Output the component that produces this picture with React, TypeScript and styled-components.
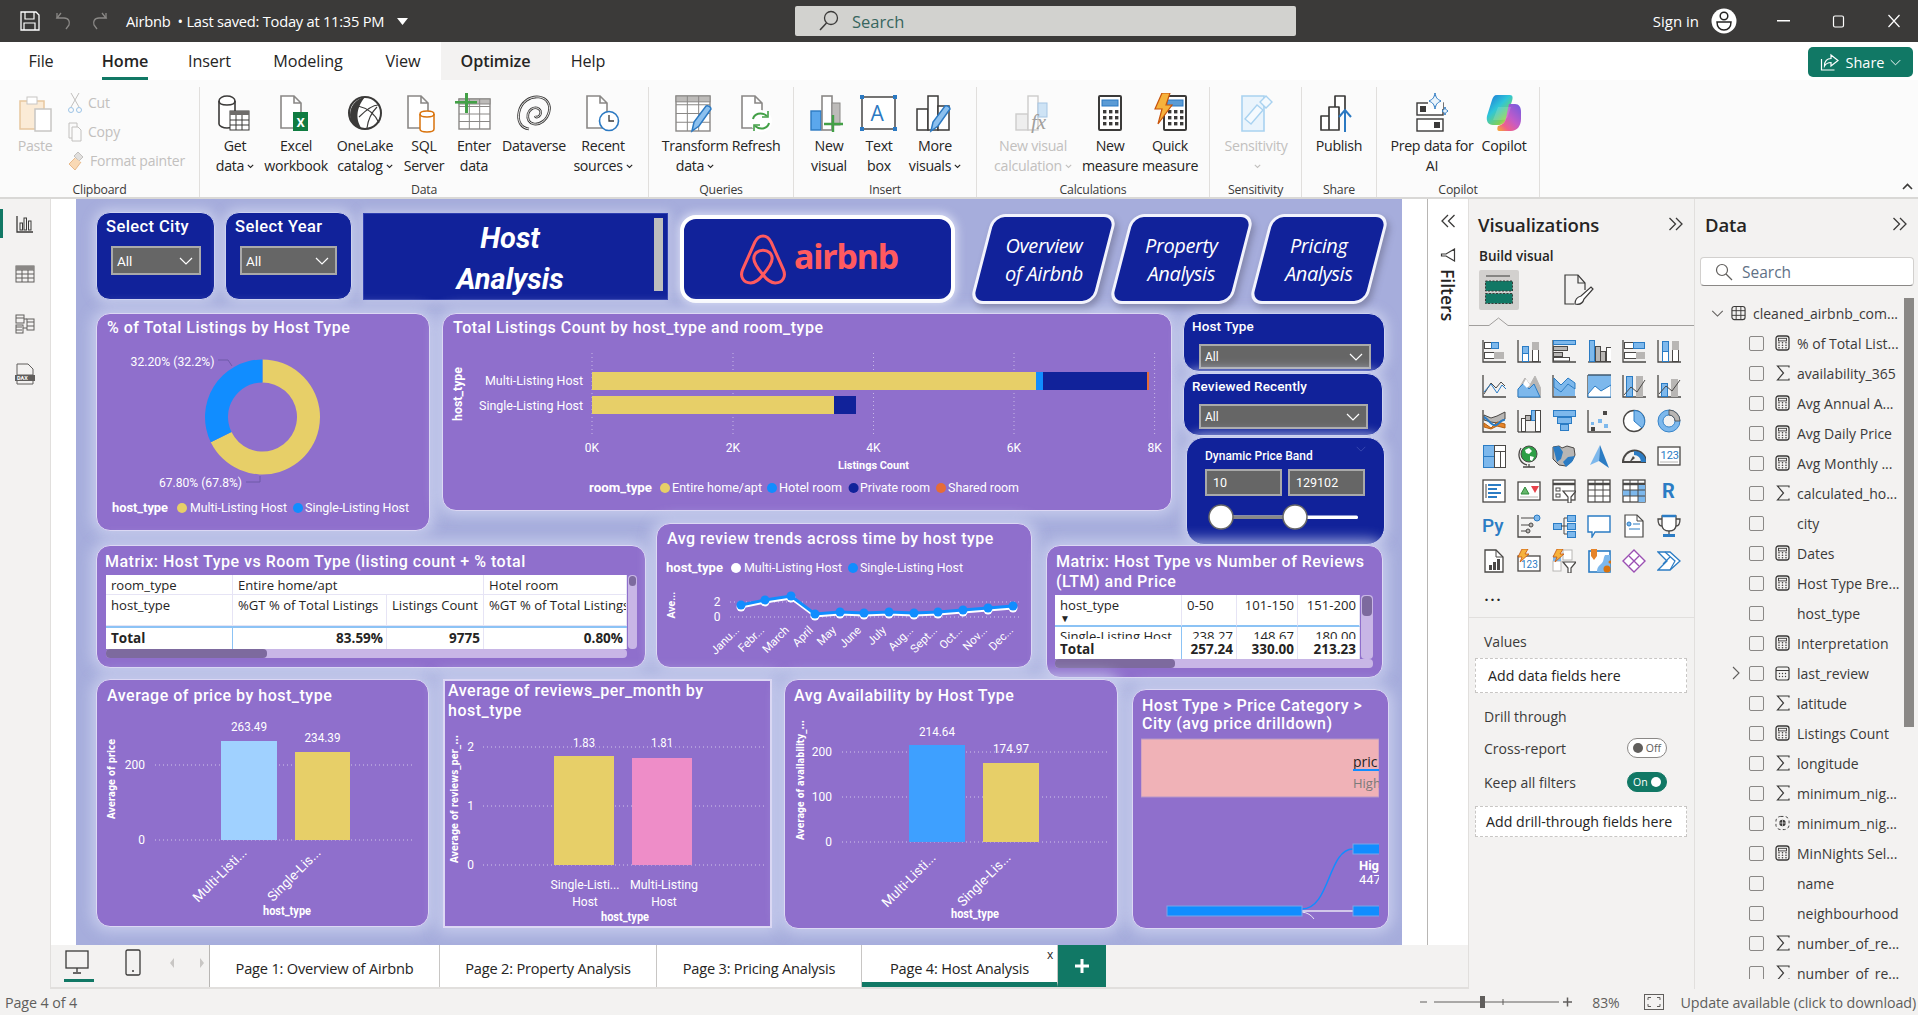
import React from "react";
import styled, { createGlobalStyle } from "styled-components";

const UI = `"Open Sans", "Noto Sans", sans-serif`;
const DIN = `Roboto, "Liberation Sans", sans-serif`;
const NAVY = "#11229A";
const CARD = "#8F6FCC";
const GREEN = "#117865";
const YEL = "#E7CF68";
const BLUE = "#118DFF";

const Global = createGlobalStyle`
  html, body { margin: 0; padding: 0; background: #fff; }
  * { box-sizing: border-box; }
  #root { width: 1918px; height: 1015px; overflow: hidden; }
`;

const App0 = styled.div`width:1918px;height:1015px;display:flex;flex-direction:column;overflow:hidden;font-family:${UI};color:#252423;`;

/* ---------- title bar ---------- */
const TitleBar = styled.header`height:42px;background:#3B3A39;display:flex;align-items:center;color:#fff;flex:none;`;
const QuickTools = styled.div`width:795px;display:flex;align-items:center;padding-left:20px;gap:13px;`;
const DocName = styled.span`font-size:14.7px;margin-left:3px;letter-spacing:-.25px;white-space:nowrap;`;
const SearchBar = styled.div`width:501px;height:30px;background:#D2D2CF;border-radius:2px;display:flex;align-items:center;padding-left:24px;gap:13px;font-size:16.5px;color:#37665E;`;
const WinArea = styled.div`flex:1;display:flex;align-items:center;justify-content:flex-end;margin-right:-3px;`;
const SignIn = styled.span`font-size:15px;margin-right:12px;`;
const WinGap = styled.span`width:19px;`;
const WinBtn = styled.span`width:55px;display:flex;justify-content:center;`;

/* ---------- tabs ---------- */
const TabBar = styled.nav`height:38px;background:#fff;display:flex;flex:none;position:relative;`;
const Tab = styled.div<{ $w: number; $on?: boolean; $hl?: boolean }>`
  width:${p => p.$w}px;height:38px;display:flex;justify-content:center;align-items:center;font-size:16.2px;letter-spacing:-.1px;
  font-weight:${p => (p.$on || p.$hl ? 600 : 400)};background:${p => (p.$hl ? "#F3F2F1" : "transparent")};
  color:#252423;
  & > span { height:38px;line-height:38px;display:block;border-bottom:${p => (p.$on ? `3px solid ${GREEN}` : "none")}; }
`;
const ShareBtn = styled.div`margin:5px 5px 0 auto;width:105px;height:30px;background:${GREEN};border-radius:5px;color:#fff;display:flex;align-items:center;justify-content:center;gap:6px;font-size:14.5px;`;

/* ---------- ribbon ---------- */
const Ribbon = styled.div`height:119px;background:#FBFBFB;display:flex;flex:none;border-bottom:2px solid #D9D8D6;position:relative;`;
const Group = styled.div<{ $w: number }>`width:${p => p.$w}px;display:flex;flex-direction:column;padding-top:7px;`;
const GroupBody = styled.div<{ $pl?: number }>`height:96px;flex:none;display:flex;padding-left:${p => p.$pl ?? 0}px;border-right:1px solid #E1DFDD;`;
const GroupLabel = styled.div`height:14px;line-height:14px;text-align:center;font-size:12.3px;color:#3B3A39;letter-spacing:-.2px;border-right:1px solid #E1DFDD;`;
const Item = styled.div<{ $w: number; $off?: boolean }>`width:${p => p.$w}px;display:flex;flex-direction:column;align-items:center;padding-top:6px;color:${p => (p.$off ? "#C2C0BE" : "#252423")};`;
const ItemIcon = styled.div`height:40px;display:flex;justify-content:center;margin-bottom:3px;`;
const ItemText = styled.div`font-size:14.2px;line-height:20px;text-align:center;white-space:nowrap;letter-spacing:-.3px;display:flex;flex-direction:column;align-items:center;`;
const ClipCol = styled.div`display:flex;flex-direction:column;padding:5px 0 0 8px;gap:8px;`;
const ClipRow = styled.div`height:21px;display:flex;align-items:center;gap:6px;font-size:14px;color:#C2C0BE;letter-spacing:-.2px;`;
const Collapse = styled.div`margin:auto 5px 2px auto;`;

/* ---------- body ---------- */
const Body = styled.main`height:790px;display:flex;flex:none;background:#F3F2F1;`;
const Rail = styled.aside`width:51px;flex:none;background:#F3F2F1;border-right:1px solid #E1DFDD;display:flex;flex-direction:column;`;
const RailItem = styled.div<{ $on?: boolean }>`height:50px;display:flex;align-items:center;justify-content:center;position:relative;
  ${p => p.$on && `&::before{content:"";position:absolute;left:0;top:10px;width:3px;height:29px;background:${GREEN};}`}`;
const Center = styled.div`width:1417px;flex:none;display:flex;flex-direction:column;`;
const Work = styled.div`height:746px;display:flex;flex:none;background:#fff;`;
const Stage = styled.div`width:1376px;background:#fff;padding:0 25px;display:flex;`;
const Canvas = styled.div`width:1326px;height:746px;flex:none;background:#A6ADDC;padding:13px 0 0 20px;display:flex;flex-direction:column;overflow:hidden;`;
const FilterPane = styled.div`width:41px;flex:none;background:#fff;border-left:1px solid #B8B6B4;display:flex;flex-direction:column;align-items:center;padding-top:15px;color:#252423;`;
const FilterGlyph = styled.svg`margin-top:20px;`;
const FilterWord = styled.div`writing-mode:vertical-rl;font-size:17.5px;font-weight:600;margin-top:7px;`;

/* ---------- canvas rows ---------- */
const Row = styled.div<{ $h: number }>`height:${p => p.$h}px;flex:none;display:flex;align-items:flex-start;`;
const Slicer = styled.div<{ $w: number; $h: number; $ml?: number; $mt?: number; $r?: number }>`
  width:${p => p.$w}px;height:${p => p.$h}px;margin-left:${p => p.$ml ?? 0}px;margin-top:${p => p.$mt ?? 0}px;background:${NAVY};color:#fff;flex:none;
  border:1px solid #CDD2F0;border-radius:${p => p.$r ?? 14}px;box-shadow:0 0 12px 3px rgba(208,212,240,.8);
`;
const SlicerStack = styled.div`width:202px;margin-left:11px;flex:none;`;
const SlicerTitle = styled.div<{ $fs?: number; $pl: number; $pt: number; $ls?: number }>`font-family:${DIN};font-weight:500;font-size:${p => p.$fs ?? 16.5}px;letter-spacing:${p => p.$ls ?? .4}px;line-height:20px;padding:${p => p.$pt}px 0 0 ${p => p.$pl}px;white-space:nowrap;`;
const Drop = styled.div<{ $w: number; $h: number; $ml: number; $mt: number; $fs?: number }>`
  width:${p => p.$w}px;height:${p => p.$h}px;margin:${p => p.$mt}px 0 0 ${p => p.$ml}px;background:#666;border:2px solid #A9A9A9;color:#fff;
  font-family:${DIN};font-size:${p => p.$fs ?? 13.5}px;display:flex;align-items:center;justify-content:space-between;padding:0 6px 0 4px;
`;
const TitleBlock = styled.div`width:305px;height:87px;margin:1px 0 0 11px;background:${NAVY};border:1px solid #2F3FB0;flex:none;display:flex;color:#fff;box-shadow:0 0 10px 2px rgba(208,212,240,.7);`;
const TitleText = styled.div`flex:1;text-align:center;font-family:${DIN};font-style:italic;font-weight:700;font-size:29px;line-height:41px;padding:4px 0 0 2px;`;
const TitleThumb = styled.div`width:9px;margin:4px 4px 8px 0;background:#BEBEBE;`;
const LogoCard = styled.div`width:275px;height:88px;margin:3px 0 0 12px;background:${NAVY};border:4px solid #fff;border-radius:16px;flex:none;display:flex;align-items:center;padding-left:55px;gap:7px;box-shadow:0 0 10px 2px rgba(230,232,250,.8);`;
const LogoWord = styled.span`font-family:"Noto Sans",sans-serif;font-weight:700;font-size:34px;color:#FF5A5F;letter-spacing:-1.1px;line-height:1;margin-top:-6px;`;
const NavWrap = styled.div`display:flex;margin:2px 0 0 26px;`;
const NavCard = styled.div<{ $w: number; $ml?: number }>`width:${p => p.$w}px;margin-left:${p => p.$ml ?? 0}px;height:90px;background:${NAVY};border:3px solid #F2F3FC;border-radius:13px;transform:skewX(-14.5deg);box-shadow:4px 4px 6px rgba(90,90,120,.45);display:flex;align-items:center;justify-content:center;`;
const NavText = styled.div`transform:skewX(14.5deg);color:#fff;font-family:${UI};font-style:italic;font-size:20px;line-height:28px;text-align:center;letter-spacing:-.4px;white-space:nowrap;padding-top:2px;`;

const Card = styled.section<{ $w: number; $h: number; $ml?: number; $mt?: number; $square?: boolean }>`
  width:${p => p.$w}px;height:${p => p.$h}px;margin-left:${p => p.$ml ?? 0}px;margin-top:${p => p.$mt ?? 0}px;flex:none;background:${CARD};
  border:${p => (p.$square ? "2px" : "1px")} solid #DCD8F4;border-radius:${p => (p.$square ? 0 : 14)}px;
  box-shadow:0 0 14px 5px rgba(205,210,240,.8);overflow:hidden;color:#fff;
`;
const CardTitle = styled.h2<{ $pt: number; $lh?: number; $pl?: number }>`
  margin:0;padding:${p => p.$pt}px 4px 3px ${p => p.$pl ?? 10}px;font-family:${DIN};font-weight:500;font-size:16px;line-height:${p => p.$lh ?? 20}px;color:#fff;letter-spacing:.5px;
`;
const PlotSvg = styled.svg`display:block;overflow:hidden;`;
const ChartT = styled.text<{ $b?: boolean; $fs?: number; $fam?: string; $c?: string }>`
  font-family:${p => p.$fam ?? DIN};font-size:${p => p.$fs ?? 12}px;font-weight:${p => (p.$b ? 700 : 400)};fill:${p => p.$c ?? "#fff"};
`;

/* matrix */
const MatrixWrap = styled.div<{ $ml: number }>`margin-left:${p => p.$ml}px;`;
const MatrixMain = styled.div`display:flex;`;
const MatrixGrid = styled.div<{ $cols: string; $rows: string; $w: number; $h: number }>`
  width:${p => p.$w}px;height:${p => p.$h}px;display:grid;grid-template-columns:${p => p.$cols};grid-template-rows:${p => p.$rows};background:#fff;overflow:hidden;color:#252423;font-size:13.1px;
`;
const Cell = styled.div<{ $span?: number; $right?: boolean; $bold?: boolean; $rule?: string; $bb?: string; $top?: boolean }>`
  grid-column:span ${p => p.$span ?? 1};padding:${p => (p.$top ? "0" : "1px")} 3px 0 5px;white-space:nowrap;overflow:hidden;
  text-align:${p => (p.$right ? "right" : "left")};font-weight:${p => (p.$bold ? 700 : 400)};
  font-size:${p => (p.$bold ? "13.5px" : "inherit")};
  border-right:1px solid ${p => p.$rule ?? "#E6E4F5"};border-bottom:${p => p.$bb ?? "1px solid #E6E4F5"};line-height:18px;
`;
const HeadRule = styled.div`grid-column:1 / -1;background:#8CC3F5;`;
const SortMark = styled.div`font-size:10px;line-height:9px;`;
const VScroll = styled.div<{ $w: number }>`width:${p => p.$w}px;background:#C8B6E6;border-radius:4px;margin-left:1px;`;
const VThumb = styled.div<{ $h: number }>`height:${p => p.$h}px;margin:1px;background:#7D6A9E;border-radius:4px;`;
const HScroll = styled.div<{ $w: number }>`width:${p => p.$w}px;height:9px;background:#C8B6E6;border-radius:4px;`;
const HThumb = styled.div<{ $w: number }>`width:${p => p.$w}px;height:9px;background:#7D6A9E;border-radius:4px;`;

/* price band */
const PriceInputs = styled.div`display:flex;gap:6px;padding:3px 0 0 18px;`;
const PriceInput = styled.div`width:77px;height:27px;background:#666;border:2px solid #A9A9A9;color:#fff;font-family:${DIN};font-size:12.5px;display:flex;align-items:center;padding-left:6px;`;
const BandHead = styled.div`display:flex;justify-content:space-between;padding:8px 18px 0 18px;font-family:${DIN};font-weight:500;font-size:12px;line-height:20px;`;
const BandSlider = styled.svg`display:block;margin-top:7px;`;

/* page bar */
const PageBar = styled.div`height:44px;flex:none;display:flex;background:#F3F2F1;border-bottom:2px solid #E1DFDD;`;
const DeviceBar = styled.div`width:159px;flex:none;display:flex;align-items:flex-start;border-right:1px solid #B8B6B4;`;
const DeviceBtn = styled.div<{ $w: number; $on?: boolean }>`width:${p => p.$w}px;height:36px;display:flex;justify-content:center;padding-top:4px;position:relative;
  ${p => p.$on && `&::after{content:"";position:absolute;left:13px;bottom:-1px;width:30px;height:3px;background:${GREEN};}`}`;
const PageTab = styled.div<{ $w: number; $on?: boolean }>`width:${p => p.$w}px;height:42px;flex:none;background:#fff;display:flex;align-items:center;justify-content:center;font-size:14.6px;letter-spacing:-.2px;color:#252423;padding-top:${p => (p.$on ? 9 : 4)}px;position:relative;font-weight:${p => (p.$on ? 500 : 400)};
  border-right:1px solid #C8C6C4;border-bottom:${p => (p.$on ? `5px solid ${GREEN}` : "none")};`;
const TabClose = styled.span`position:absolute;right:4px;top:4px;font-size:12px;line-height:12px;`;
const AddPage = styled.div`width:48px;height:42px;background:${GREEN};display:flex;align-items:center;justify-content:center;color:#fff;`;

/* viz pane */
const VizPane = styled.section`width:226px;flex:none;background:#F3F2F1;border-left:1px solid #E1DFDD;display:flex;flex-direction:column;`;
const PaneHead = styled.div<{ $pl: number; $pr: number }>`display:flex;justify-content:space-between;align-items:center;padding:13px ${p => p.$pr}px 0 ${p => p.$pl}px;height:37px;font-size:18.5px;font-weight:600;color:#252423;letter-spacing:-.1px;`;
const BuildLabel = styled.div`font-size:13.5px;font-weight:600;padding:12px 0 0 10px;line-height:17px;`;
const VizTabs = styled.div`display:flex;padding:5px 0 0 10px;align-items:center;gap:44px;`;
const VizTabOn = styled.div`width:40px;height:40px;background:#D2D0CE;border-radius:2px;display:flex;align-items:center;justify-content:center;`;
const Notch = styled.svg`display:block;margin-top:7px;`;
const Gallery = styled.div`display:grid;grid-template-columns:repeat(6,35px);grid-auto-rows:35px;padding:7px 0 0 7px;justify-items:center;align-items:center;`;
const Dots = styled.div`font-size:14px;font-weight:700;letter-spacing:2px;line-height:20px;`;
const GalleryEnd = styled.div`height:4px;flex:none;`;
const Rule = styled.hr`width:100%;border:0;border-top:1px solid #E1DFDD;margin:0;`;
const SectionName = styled.div<{ $mt: number }>`font-size:14px;padding-left:15px;margin-top:${p => p.$mt}px;line-height:20px;color:#3B3A39;`;
const DropBox = styled.div<{ $h: number; $mt: number; $pl: number }>`width:212px;height:${p => p.$h}px;margin:${p => p.$mt}px 0 0 6px;background:#fff;border:1px dashed #C8C6C4;display:flex;align-items:center;padding-left:${p => p.$pl}px;font-size:14.2px;white-space:nowrap;color:#252423;`;
const ToggleRow = styled.div<{ $mt: number }>`display:flex;align-items:center;justify-content:space-between;width:183px;margin:${p => p.$mt}px 0 0 15px;font-size:14px;height:20px;color:#3B3A39;`;
const Toggle = styled.div<{ $on?: boolean }>`width:40px;height:20px;border-radius:10px;background:${p => (p.$on ? GREEN : "#fff")};border:1px solid ${p => (p.$on ? GREEN : "#8A8886")};color:${p => (p.$on ? "#fff" : "#605E5C")};font-size:10.5px;display:flex;flex-direction:${p => (p.$on ? "row-reverse" : "row")};align-items:center;justify-content:space-between;padding:0 5px;`;
const Knob = styled.i<{ $on?: boolean }>`width:10px;height:10px;border-radius:50%;background:${p => (p.$on ? "#fff" : "#605E5C")};display:block;`;

/* data pane */
const DataPane = styled.section`width:224px;flex:none;background:#F3F2F1;border-left:1px solid #E1DFDD;display:flex;flex-direction:column;`;
const DataSearch = styled.div`width:214px;height:29px;margin:21px 0 0 5px;background:#fff;border:1px solid #D2D0CE;border-bottom:1px solid #8A8886;border-radius:4px;display:flex;align-items:center;padding-left:14px;gap:9px;font-size:15.5px;color:#5F7186;`;
const ListArea = styled.div`display:flex;height:681px;margin-top:12px;overflow:hidden;`;
const FieldList = styled.div`width:209px;flex:none;`;
const FieldRow = styled.div<{ $root?: boolean }>`height:30px;display:flex;align-items:center;font-size:14px;color:#3B3A39;white-space:nowrap;padding-left:${p => (p.$root ? 16 : 54)}px;position:relative;`;
const Caret = styled.div`width:20px;flex:none;display:flex;align-items:center;`;
const ExpandMark = styled.svg`position:absolute;left:37px;top:8px;`;
const Box = styled.div`width:15px;height:15px;border:1px solid #8A8886;border-radius:2px;background:transparent;flex:none;margin-right:11px;`;
const FieldIcon = styled.div`width:15px;flex:none;margin-right:7px;display:flex;align-items:center;justify-content:center;`;
const DataThumb = styled.div`width:10px;height:431px;background:#8A8886;flex:none;margin-top:-2px;`;

/* status bar */
const Status = styled.footer`height:26px;flex:none;background:#F3F2F1;display:flex;align-items:center;font-size:14.3px;letter-spacing:-.1px;color:#605E5C;padding:0 2px 0 5px;`;
const StatusRight = styled.div`margin-left:auto;display:flex;align-items:center;`;
const ZoomPct = styled.span`margin-left:17px;font-size:14px;`;
const FitIcon = styled.svg`margin:0 17px 0 24px;`;
const UpdateNote = styled.span`font-size:14.3px;white-space:nowrap;`;

/* ---------- svg helpers ---------- */
type TP = { x: number; y: number; w?: number; a?: "start" | "middle" | "end"; b?: boolean; fs?: number; r?: number; fam?: string; c?: string; children: React.ReactNode };
const T = ({ x, y, w, a = "start", b, fs, r, fam, c, children }: TP) => (
  <ChartT x={x} y={y} textAnchor={a} dominantBaseline="central" $b={b} $fs={fs} $fam={fam} $c={c}
    textLength={w} lengthAdjust={w ? "spacingAndGlyphs" : undefined}
    transform={r !== undefined ? `rotate(${r} ${x} ${y})` : undefined}>{children}</ChartT>
);
const GridH = ({ x1, x2, y }: { x1: number; x2: number; y: number }) => <line x1={x1} x2={x2} y1={y} y2={y} stroke="#fff" strokeOpacity=".6" strokeWidth="1" strokeDasharray="1 3" />;
const GridV = ({ x, y1, y2 }: { x: number; y1: number; y2: number }) => <line x1={x} x2={x} y1={y1} y2={y2} stroke="#fff" strokeOpacity=".5" strokeWidth="1" strokeDasharray="1 3" />;
const Plot = ({ x, y, w, h, children }: { x: number; y: number; w: number; h: number; children: React.ReactNode }) => (
  <PlotSvg width={w} height={h} viewBox={`${x} ${y} ${w} ${h}`}>{children}</PlotSvg>
);
const Dot = ({ x, y, c, r = 5 }: { x: number; y: number; c: string; r?: number }) => <circle cx={x} cy={y} r={r} fill={c} />;
const Chev = ({ c = "#fff", w = 14, h = 8, sw = 1.2 }: { c?: string; w?: number; h?: number; sw?: number }) => (
  <svg width={w} height={h} viewBox="0 0 14 8" fill="none"><path d="M1 1l6 6 6-6" stroke={c} strokeWidth={sw} /></svg>
);
const MiniSvg = styled.svg`margin-left:3px;`;
const Mini = () => <MiniSvg width="7" height="5" viewBox="0 0 7 5" fill="none"><path d="M.8.8l2.7 2.7L6.2.8" stroke="currentColor" strokeWidth="1.1" /></MiniSvg>;
const DDWrap = styled.span`display:inline-flex;align-items:center;`;
const DD = ({ children }: { children: React.ReactNode }) => <DDWrap>{children}<Mini /></DDWrap>;
const MiniLine = styled.div`height:20px;display:flex;align-items:center;`;

/* ---------- ribbon icons ---------- */
const K = "#3B3A39", GY = "#8A8886";
const Ic = ({ children, w = 40 }: { children: React.ReactNode; w?: number }) => <svg width={w} height="40" viewBox={`0 0 ${w} 40`} fill="none">{children}</svg>;
const Doc = ({ x = 6, c = GY }: { x?: number; c?: string }) => <path d={`M${x} 3h13l7 7v25h-20z M${x + 13} 3v7h7`} fill="#fff" stroke={c} strokeWidth="1.6" />;
const Calc = ({ x = 10 }: { x?: number }) => (<g>
  <rect x={x} y="3" width="22" height="34" rx="1" fill="#fff" stroke={K} strokeWidth="2" />
  <rect x={x + 3} y="7" width="16" height="6" fill="#5B9BD5" stroke="#2B79C2" />
  {[17, 23, 29].map(y => [4, 10, 16].map(dx => <rect key={`${y}${dx}`} x={x + dx} y={y} width="3.4" height="3.4" fill={K} />))}
</g>);
const GridIc = ({ x, y, w, h, head = "#BDBBB9" }: { x: number; y: number; w: number; h: number; head?: string }) => (<g>
  <rect x={x} y={y} width={w} height={h} fill="#fff" stroke={GY} strokeWidth="1.4" />
  <rect x={x} y={y} width={w} height={h / 6} fill={head} stroke={GY} />
  {[1, 2, 3].map(i => <line key={i} x1={x} x2={x + w} y1={y + (h / 4) * i} y2={y + (h / 4) * i} stroke={GY} />)}
  {[1, 2].map(i => <line key={i} y1={y} y2={y + h} x1={x + (w / 3) * i} x2={x + (w / 3) * i} stroke={GY} />)}
</g>);
const Pencil = ({ x, y }: { x: number; y: number }) => <path d={`M${x} ${y + 26}l2-9L${x + 14} ${y + 1}c2-1 5 1 5 3L${x + 7} ${y + 21}z`} fill="#8CC0EE" stroke="#2B79C2" strokeWidth="1.5" />;
const RibbonIcons: Record<string, React.ReactNode> = {
  paste: <Ic w={36}><rect x="3" y="8" width="24" height="28" fill="#FBEBD6" stroke="#E8C79F" strokeWidth="1.5" /><rect x="10" y="4" width="10" height="7" fill="#fff" stroke="#C8C6C4" /><rect x="18" y="16" width="16" height="22" fill="#fff" stroke="#C8C6C4" strokeWidth="1.5" /></Ic>,
  get: <Ic><path d="M4 8c0-3 4-5 8-5s8 2 8 5v23c0 2-4 4-8 4s-8-2-8-4z" fill="#fff" stroke={K} strokeWidth="1.6" /><path d="M4 8c0 3 4 4 8 4s8-1 8-4" stroke={K} strokeWidth="1.6" /><rect x="15" y="18" width="19" height="19" fill="#fff" stroke={K} /><rect x="15" y="18" width="19" height="4" fill="#6E6C6A" /><path d="M15 27h19M15 32h19M21 22v15M27 22v15" stroke={K} /></Ic>,
  excel: <Ic><Doc x={5} /><rect x="17" y="19" width="15" height="19" fill="#107C41" /><text x="20.6" y="33.5" fill="#fff" fontFamily="Roboto" fontSize="13" fontWeight="700">X</text></Ic>,
  lake: <Ic><circle cx="20" cy="20" r="16" fill="#fff" stroke={K} strokeWidth="2" /><path d="M20 4C10 6 5 14 5 22c0 7 5 12 12 14-6-8-7-20 3-32z" fill="#3B3A39" /><path d="M13 13c9 2 17 8 21 17M14 24c8-8 14-12 19-12M22 35c1-8 4-15 10-21" stroke={K} strokeWidth="1.1" /></Ic>,
  sql: <Ic w={36}><Doc x={2} /><path d="M14 21c0-2 3-3 7-3s7 1 7 3v15c0 2-3 3-7 3s-7-1-7-3z" fill="#FFF" stroke="#D9730D" strokeWidth="1.5" /><path d="M14 21c0 2 3 3 7 3s7-1 7-3" stroke="#D9730D" strokeWidth="1.5" /></Ic>,
  enter: <Ic w={38}><GridIc x={4} y={6} w={31} h={30} /><rect x="4" y="0" width="3" height="20" fill="#43A047" transform="translate(6 0)" /><rect x="0" y="8" width="22" height="2.6" fill="#43A047" /></Ic>,
  dv: <Ic><path d="M15 36C7 35 3 28 5 19 7 9 16 3 25 4c8 1 12 8 10 15-2 8-9 13-15 12-5-1-7-5-6-10 1-4 5-7 9-6 3 1 5 4 3 7-1 2-4 3-5 1" stroke={K} strokeWidth="2.6" /><path d="M15 36C7 35 3 28 5 19 7 9 16 3 25 4c8 1 12 8 10 15-2 8-9 13-15 12-5-1-7-5-6-10 1-4 5-7 9-6 3 1 5 4 3 7-1 2-4 3-5 1" stroke="#fff" strokeWidth=".9" /></Ic>,
  recent: <Ic><Doc x={4} /><circle cx="26" cy="28" r="9.5" fill="#fff" stroke="#2B79C2" strokeWidth="1.6" /><path d="M26 22v6h5" stroke={K} strokeWidth="1.3" /></Ic>,
  transform: <Ic w={42}><GridIc x={2} y={3} w={34} h={35} /><Pencil x={18} y={12} /></Ic>,
  refresh: <Ic><Doc x={6} /><circle cx="25" cy="28" r="11" fill="#fff" /><path d="M17 26c1-5 8-8 14-3M33 30c-1 5-8 8-14 3" stroke="#43A047" strokeWidth="2" /><path d="M32 18v6h-6M18 38v-6h6" stroke="#43A047" strokeWidth="1.6" /></Ic>,
  newviz: <Ic><rect x="2" y="18" width="10" height="19" fill="#5BA7EC" stroke="#2B79C2" strokeWidth="1.4" /><rect x="13" y="3" width="10" height="34" fill="#fff" stroke={GY} strokeWidth="1.6" /><rect x="23" y="10" width="8" height="22" fill="#BDBBB9" stroke={GY} /><path d="M24 22v17M15 31h19" stroke="#43A047" strokeWidth="2.4" /></Ic>,
  textbox: <Ic><rect x="3" y="4" width="33" height="32" fill="#fff" stroke={K} strokeWidth="1.4" />{[[3, 4], [36, 4], [3, 36], [36, 36]].map(([x, y]) => <rect key={`${x}${y}`} x={x - 2} y={y - 2} width="4" height="4" fill="#2B79C2" />)}<text x="11.5" y="28" fill="#2B79C2" fontFamily="Open Sans" fontSize="21">A</text></Ic>,
  more: <Ic w={38}><rect x="1" y="16" width="11" height="21" fill="#fff" stroke={K} strokeWidth="1.5" /><rect x="12" y="3" width="10" height="34" fill="#fff" stroke={K} strokeWidth="1.5" /><rect x="22" y="13" width="11" height="24" fill="#fff" stroke={K} strokeWidth="1.5" /><Pencil x={15} y={12} /></Ic>,
  vcalc: <Ic><g opacity=".4"><rect x="3" y="21" width="12" height="16" fill="#ddd" stroke={GY} strokeWidth="1.4" /><rect x="15" y="3" width="10" height="34" fill="#fff" stroke={GY} strokeWidth="1.4" /><rect x="25" y="10" width="9" height="14" fill="#8CC0EE" stroke="#2B79C2" /></g><text x="18" y="36" fontFamily="Liberation Serif" fontStyle="italic" fontSize="21" fill="#A19F9D">fx</text></Ic>,
  measure: <Ic w={36}><Calc x={7} /></Ic>,
  quick: <Ic><Calc x={14} /><path d="M12 0h8l-4 12h6L8 31l4-15H5z" fill="#F6B23C" stroke="#C8530B" strokeWidth="1.2" /></Ic>,
  sens: <Ic><path d="M6 3h22v35H6z" fill="#EAF4FC" stroke="#A9D2F0" strokeWidth="1.6" /><path d="M15 31L9 26l12-14 6 5z M24 9l6-6 6 6-6 6z" fill="#F5FAFE" stroke="#A9D2F0" strokeWidth="1.4" /></Ic>,
  publish: <Ic><path d="M2 23h8v14H2zM10 14h10v23H10zM16 14V3h10v22" fill="#fff" stroke={K} strokeWidth="1.7" strokeLinejoin="round" /><path d="M26 39V17M20 24l6-7 6 7" stroke="#2B79C2" strokeWidth="2" /></Ic>,
  prep: <Ic w={36}><rect x="3" y="10" width="26" height="12" fill="#fff" stroke={K} strokeWidth="1.4" /><rect x="6" y="13" width="6" height="6" fill={K} /><rect x="3" y="26" width="26" height="12" fill="#fff" stroke={K} strokeWidth="1.4" /><rect x="20" y="29" width="6" height="6" fill={K} /><rect x="14" y="0" width="15" height="16" fill="#FBFBFB" /><path d="M21 0c1 5 2 6 6 8-4 2-5 3-6 8-1-5-2-6-6-8 4-2 5-3 6-8zM31 14c.6 2 1 3 3 4-2 1-2.4 2-3 4-.6-2-1-3-3-4 2-1 2.4-2 3-4z" fill="#EAF4FC" stroke="#2B79C2" /></Ic>,
  copilot: <Ic><defs><linearGradient id="cpa" x1="0" y1="0" x2="0.8" y2="1"><stop offset="0" stopColor="#1B6FD8" /><stop offset=".45" stopColor="#2FC6D8" /><stop offset=".8" stopColor="#7FD05A" /><stop offset="1" stopColor="#F2C94C" /></linearGradient><linearGradient id="cpb" x1="1" y1="0" x2="0.1" y2="1"><stop offset="0" stopColor="#6D5BE0" /><stop offset=".5" stopColor="#C35BC8" /><stop offset=".8" stopColor="#F0608A" /><stop offset="1" stopColor="#F5A13C" /></linearGradient></defs><path d="M13 2h13c3 0 3 3 2 6l-6 18c-1 4-4 6-8 6H9c-5 0-7-4-6-9L8 7c1-3 2-5 5-5z" fill="url(#cpa)" /><path d="M25 11h6c4 0 6 3 6 8v7c0 7-4 12-10 12H15c-2 0-2-3-1-5 4-1 7-3 8-8z" fill="url(#cpb)" /><path d="M14 14h13l-3 9c-1 3-3 4-6 4h-9z" fill="#FFF" fillOpacity=".15" /></Ic>,
};

/* ---------- visual gallery ---------- */
const VD = "#4A4846", VB = "#2B7CC4", VL = "#7DB8EC", VG = "#B8B6B4", VW = "#fff";
const Rc = ({ x, y, w, h, f = VL, s = VB }: { x: number; y: number; w: number; h: number; f?: string; s?: string }) => <rect x={x + .5} y={y + .5} width={w} height={h} fill={f} stroke={s} />;
const Ax = () => <path d="M1 1v22h23" stroke={VD} strokeWidth="1.3" fill="none" />;
const Bt = () => <path d="M1 23h23" stroke={VD} strokeWidth="1.3" fill="none" />;
const vizIcons: React.ReactNode[] = [
  <><Ax /><Rc x={2} y={3} w={7} h={6} f={VW} s={VD} /><Rc x={9} y={3} w={7} h={6} /><Rc x={2} y={13} w={10} h={6} f={VW} s={VD} /><Rc x={12} y={13} w={9} h={6} f={VG} s={VG} /></>,
  <><Ax /><Rc x={5} y={14} w={6} h={8} f={VW} /><Rc x={5} y={7} w={6} h={7} /><Rc x={15} y={10} w={6} h={12} f={VW} s={VD} /><Rc x={15} y={3} w={6} h={7} f={VG} s={VG} /></>,
  <><Ax /><Rc x={1} y={1} w={22} h={4} /><Rc x={1} y={7} w={14} h={4} f={VG} s={VD} /><Rc x={1} y={13} w={9} h={4} f={VG} s={VD} /><Rc x={1} y={18} w={16} h={3.5} f={VW} s={VD} /></>,
  <><Bt /><Rc x={2} y={1} w={5} h={21} /><Rc x={8} y={7} w={5} h={15} f={VG} s={VD} /><Rc x={13} y={12} w={5} h={10} f={VG} s={VD} /><Rc x={19} y={8} w={5} h={14} f={VW} s={VD} /></>,
  <><Ax /><Rc x={2} y={3} w={9} h={6} f={VW} s={VD} /><Rc x={11} y={3} w={11} h={6} /><Rc x={2} y={13} w={12} h={6} f={VW} s={VD} /><Rc x={14} y={13} w={8} h={6} f={VG} s={VG} /></>,
  <><Ax /><Rc x={5} y={12} w={6} h={10} f={VW} /><Rc x={5} y={2} w={6} h={10} /><Rc x={15} y={10} w={6} h={12} f={VW} s={VD} /><Rc x={15} y={2} w={6} h={8} f={VG} s={VG} /></>,
  <><Ax /><path d="M2 20L9 9l5 5 5-6 4 4" stroke={VD} fill="none" /><path d="M2 14l7-8 6 9 5-8 4 4" stroke={VB} fill="none" transform="translate(0 4)" /></>,
  <><Bt /><path d="M1 23V16L8 4l5 7 5-9 6 13v8z" fill={VG} stroke={VG} /><path d="M1 23v-8l6-6 5 6 5-5 6 13z" fill={VL} stroke={VB} /><path d="M6 10l3-5 4 6-3 3z" fill={VW} /></>,
  <><Ax /><path d="M2 22v-9l7 5 7-8 7 5v7z" fill={VL} /><path d="M2 4l7 7 7-7 7 5v6l-7-5-7 8-7-5z" fill={VL} stroke={VB} /></>,
  <><Ax /><rect x="1" y="1" width="23" height="21" fill={VL} /><path d="M1 1h23M1 20l7-8 6 5 10-6v12H1z" stroke={VB} fill={VW} /><path d="M1 1h23" stroke={VD} /></>,
  <><Ax /><Rc x={4} y={2} w={6} h={20} /><Rc x={14} y={2} w={6} h={20} f={VG} s={VG} /><path d="M2 21l7-8 6 5 8-12" stroke={VD} fill="none" /></>,
  <><Ax /><Rc x={4} y={9} w={6} h={13} /><Rc x={14} y={5} w={6} h={17} f={VG} s={VG} /><path d="M2 20l7-8 6 5 8-11" stroke={VD} fill="none" /></>,
  <><Ax /><path d="M2 6l7 3 6-2 8-4v7l-8 4-6-1-7-2z" fill={VG} stroke={VD} /><path d="M2 14l7 5 6-6 8 2v4l-8-2-6 3-7-2z" fill="#E6842A" stroke="#B5600F" /><path d="M2 8c5 2 7 10 12 8s5-6 9-5" stroke={VB} strokeWidth="2" fill="none" /></>,
  <><Bt /><path d="M1 1v22" stroke={VD} strokeWidth="1.3" /><Rc x={4} y={9} w={4} h={13} f={VW} s={VD} /><Rc x={8} y={6} w={5} h={5} f={VG} s={VD} /><Rc x={14} y={1} w={4} h={10} /><Rc x={18} y={1} w={5} h={21} f={VW} s={VD} /></>,
  <><Rc x={1} y={1} w={22} h={6} /><Rc x={5} y={8} w={14} h={6} /><Rc x={8} y={15} w={8} h={6} /></>,
  <><Ax /><rect x="16" y="2" width="4" height="4" fill={VD} /><rect x="11" y="10" width="4" height="4" fill={VL} /><rect x="4" y="13" width="3" height="3" fill={VL} /><rect x="17" y="15" width="4" height="4" fill={VL} /><rect x="4" y="18" width="4" height="4" fill={VD} /></>,
  <><circle cx="12" cy="12" r="10.5" fill={VW} stroke={VD} strokeWidth="1.3" /><path d="M12 12V1.5A10.5 10.5 0 0 1 20 19z" fill={VL} stroke={VB} /></>,
  <><circle cx="12" cy="12" r="8.5" fill="none" stroke={VL} strokeWidth="5" /><circle cx="12" cy="12" r="11" fill="none" stroke={VB} strokeWidth=".9" /><circle cx="12" cy="12" r="6" fill="none" stroke={VB} strokeWidth=".9" /><path d="M12 1a11 11 0 0 1 11 11h-5a6 6 0 0 0-6-6z" fill={VG} stroke={VD} strokeWidth=".8" /></>,
  <><Rc x={1} y={1} w={11} h={11} /><Rc x={1} y={12} w={11} h={11} /><Rc x={12} y={1} w={11} h={6} f={VW} s={VD} /><Rc x={12} y={7} w={6} h={16} f={VW} s={VD} /><Rc x={18} y={7} w={5} h={16} f={VW} s={VD} /></>,
  <><circle cx="12" cy="10" r="8" fill="#2E9F46" stroke={VD} /><path d="M8 6l4-2 3 3-3 3-3-1zM13 12l4 1-2 4-2-1z" fill={VW} /><path d="M4 4c-4 6-2 15 6 17M6 23h12M12 20v3" stroke={VD} strokeWidth="1.3" fill="none" /></>,
  <><path d="M1 3l6-1 3 2 5-2 7 2 1 7-3 6-6 5-7-1-6-6z" fill={VG} stroke={VD} /><path d="M1 3l6-1 4 6-2 7-4 3z" fill={VB} /><path d="M11 18l5-5 7-1-3 6-6 5z" fill={VB} /></>,
  <><path d="M13 1L3 21l9-4z" fill={VL} /><path d="M13 1l9 23-10-7z" fill={VB} /></>,
  <><path d="M1 18a11.5 11.5 0 0 1 23 0z" fill="none" stroke={VD} strokeWidth="2" /><path d="M12 7a11.5 11.5 0 0 1 12 11h-5a7 7 0 0 0-7-7z" fill={VB} /><path d="M7 19l4-7 2 2z" fill={VD} /></>,
  <><rect x="1" y="3" width="22" height="18" fill={VW} stroke={VD} strokeWidth="1.3" /><text x="3.5" y="15" fontSize="11" fontFamily="Roboto" fill={VB}>123</text><path d="M3 18h18" stroke={VG} /></>,
  <><rect x="1" y="1" width="22" height="22" fill={VW} stroke={VD} strokeWidth="1.3" /><path d="M4 5v14" stroke={VD} /><path d="M6 6h13M6 10h9" stroke={VB} strokeWidth="1.8" /><path d="M6 14h13M6 18h9" stroke={VB} strokeWidth="1.8" /></>,
  <><rect x="1" y="3" width="22" height="18" fill={VW} stroke={VD} strokeWidth="1.3" /><path d="M4 15l4-7 4 7z" fill="#67B76C" stroke="#2E8B3A" /><path d="M14 7h8l-4 7z" fill="#E8424B" /><path d="M3 18h18" stroke={VG} /></>,
  <><rect x="1" y="1" width="22" height="20" fill={VW} stroke={VD} strokeWidth="1.3" /><path d="M1 5h22" stroke={VD} strokeWidth="2.5" /><rect x="4" y="9" width="4" height="3" fill={VW} stroke={VD} /><rect x="4" y="15" width="4" height="3" fill={VW} stroke={VD} /><path d="M11 12h13l-5 6v6h-3v-6z" fill={VW} stroke={VD} strokeWidth="1.2" /></>,
  <><rect x="1" y="1" width="22" height="22" fill={VW} stroke={VD} strokeWidth="1.3" /><path d="M1 5h22" stroke={VD} strokeWidth="2.5" /><path d="M8 1v22M16 1v22M1 11h22M1 17h22" stroke={VD} /></>,
  <><rect x="1" y="1" width="22" height="22" fill={VW} stroke={VD} strokeWidth="1.3" /><path d="M1 5h22" stroke={VD} strokeWidth="2.5" /><rect x="1" y="11" width="15" height="6" fill={VL} /><rect x="16" y="6" width="7" height="17" fill={VL} /><path d="M8 1v22M16 1v22M1 11h22M1 17h22" stroke={VD} /></>,
  <text x="5" y="19" fontFamily="Roboto" fontWeight="700" fontSize="20" fill={VB}>R</text>,
  <text x="0" y="18" fontFamily="Roboto" fontWeight="500" fontSize="19" fill={VB}>Py</text>,
  <><Ax /><path d="M4 4h14M4 11h9M4 17h6" stroke={VD} /><circle cx="20" cy="4" r="3" fill={VL} stroke={VB} /><circle cx="14" cy="11" r="2" fill={VG} stroke={VD} /><circle cx="11" cy="17" r="2" fill={VG} stroke={VD} /></>,
  <><Rc x={1} y={9} w={8} h={6} /><Rc x={15} y={1} w={8} h={6} /><Rc x={15} y={9} w={8} h={6} /><Rc x={15} y={17} w={8} h={6} /><path d="M9 12h6M12 4v16M12 4h3M12 20h3" stroke={VD} fill="none" /></>,
  <path d="M1 2h22v16H8l-3 5v-5H1z" fill={VW} stroke={VB} strokeWidth="1.4" />,
  <><path d="M3 1h12l6 6v16H3z" fill={VW} stroke={VD} strokeWidth="1.2" /><circle cx="7" cy="10" r="2" fill={VL} stroke={VB} /><path d="M11 10h7M7 15h11" stroke={VB} /><path d="M15 1v6h6" fill="none" stroke={VD} /></>,
  <><path d="M5 2h14v9c0 4-3 6-7 6s-7-2-7-6z" fill={VW} stroke={VD} strokeWidth="1.3" /><path d="M5 2h14" stroke={VB} strokeWidth="2.5" /><path d="M5 5H1c0 5 2 7 4 7M19 5h4c0 5-2 7-4 7M12 17v3" fill="none" stroke={VD} strokeWidth="1.3" /><rect x="6" y="20" width="12" height="3" fill={VB} /></>,
  <><path d="M3 1h11l7 7v15H3z" fill={VW} stroke={VD} strokeWidth="1.3" /><path d="M14 1v7h7" fill="none" stroke={VD} /><rect x="7" y="16" width="3" height="5" fill={VD} /><rect x="11" y="13" width="3" height="8" fill={VD} /><rect x="15" y="10" width="3" height="11" fill={VD} /></>,
  <><rect x="1" y="7" width="22" height="15" fill={VW} stroke={VD} strokeWidth="1.3" /><text x="4" y="19" fontFamily="Roboto" fontSize="10" fill={VB}>123</text><path d="M5 0h6L8 5h4L3 13l2-5H1z" fill="#F6B23C" stroke="#C8530B" strokeWidth=".8" /></>,
  <><rect x="1" y="12" width="8" height="10" fill={VW} stroke={VG} /><rect x="11" y="1" width="9" height="10" fill={VW} stroke={VG} /><rect x="1" y="6" width="8" height="6" fill={VL} /><path d="M11 13h13l-5 6v5h-3v-5z" fill={VW} stroke={VD} strokeWidth="1.2" /><path d="M5 0h6L8 5h4L3 13l2-5H1z" fill="#F6B23C" stroke="#C8530B" strokeWidth=".8" /></>,
  <><rect x="2" y="2" width="21" height="21" fill={VW} stroke={VB} strokeWidth="1.6" /><path d="M10 23c0-5 2-6 5-9 2-2 1-5 3-8h5v17z" fill={VL} /><path d="M4 0h6v7l-3 4-3-4z" fill="#E6842A" /><circle cx="20" cy="20" r="3.5" fill="#D9730D" /><circle cx="23" cy="13" r="1.5" fill="#D9730D" /></>,
  <><path d="M12 1l11 11-11 11L1 12z" fill={VW} stroke="#9B4FB3" strokeWidth="1.4" /><path d="M7 7l5 5-5 5M12 12l5-5M12 12l5 5" stroke="#9B4FB3" strokeWidth="1.4" fill="none" /></>,
  <><path d="M1 3h12l10 9-10 9H1l9-9z" fill={VW} stroke={VB} strokeWidth="1.3" /><path d="M8 3l10 9-5 9M13 8l-7 7" stroke={VB} strokeWidth="1.2" fill="none" /></>,
];

const CalcIcon = () => <svg width="15" height="16" viewBox="0 0 15 16" fill="none"><rect x="1" y="1" width="13" height="14" rx="2.5" stroke={K} strokeWidth="1.3" /><rect x="3.5" y="3.3" width="8" height="2.6" stroke={K} strokeWidth=".9" />{[8, 10.5, 13].map(y => [4, 7.5, 11].map(x => <circle key={`${x}${y}`} cx={x} cy={y - .3} r=".8" fill={K} />))}</svg>;
const SigmaIcon = () => <svg width="14" height="16" viewBox="0 0 14 16" fill="none"><path d="M13 2.5V1H1.500l6 7-6 7H13v-1.500" stroke={K} strokeWidth="1.2" /></svg>;
const CalIcon = () => <svg width="15" height="15" viewBox="0 0 15 15" fill="none"><rect x="1" y="1" width="13" height="13" rx="2" stroke={K} strokeWidth="1.2" /><path d="M1 4.500h13" stroke={K} />{[7.5, 10.5].map(y => [4.5, 7.5, 10.5].map(x => <circle key={`${x}${y}`} cx={x} cy={y} r=".7" fill={K} />))}</svg>;
const HierIcon = () => <svg width="16" height="16" viewBox="0 0 16 16" fill="none"><rect x="1" y="1" width="14" height="14" rx="5" stroke={K} strokeDasharray="3 2.5" /><circle cx="8" cy="8" r="3.4" fill={K} /><path d="M4.600 8h6.800M8 4.600v6.800" stroke="#F3F2F1" strokeWidth=".7" /></svg>;
type FK = "calc" | "sum" | "none" | "cal" | "hier";
const fields: [string, FK, boolean?][] = [
  ["% of Total List...", "calc"], ["availability_365", "sum"], ["Avg Annual A...", "calc"], ["Avg Daily Price", "calc"], ["Avg Monthly ...", "calc"],
  ["calculated_ho...", "sum"], ["city", "none"], ["Dates", "calc"], ["Host Type Bre...", "calc"], ["host_type", "none"], ["Interpretation", "calc"],
  ["last_review", "cal", true], ["latitude", "sum"], ["Listings Count", "calc"], ["longitude", "sum"], ["minimum_nig...", "sum"], ["minimum_nig...", "hier"],
  ["MinNights Sel...", "calc"], ["name", "none"], ["neighbourhood", "none"], ["number_of_re...", "sum"], ["number_of_re...", "sum"],
];
const fieldIcon = (k: FK) => k === "calc" ? <CalcIcon /> : k === "sum" ? <SigmaIcon /> : k === "cal" ? <CalIcon /> : k === "hier" ? <HierIcon /> : null;

const DblSvg = styled.svg<{ $flip?: boolean }>`${p => p.$flip && "transform:scaleX(-1);"}`;
const Dbl = ({ dir }: { dir: "l" | "r" }) => <DblSvg $flip={dir === "l"} width="16" height="14" viewBox="0 0 16 14" fill="none"><path d="M1.500 1l6 6-6 6M8 1l6 6-6 6" stroke={K} strokeWidth="1.3" /></DblSvg>;

const ribbon: { w: number; pl: number; label: string; items: [number, string, React.ReactNode, boolean?][]; clip?: boolean }[] = [
  { w: 200, pl: 10, label: "Clipboard", clip: true, items: [[50, "paste", <div>Paste</div>, true]] },
  { w: 449, pl: 5, label: "Data", items: [
    [60, "get", <><div>Get</div><DD>data</DD></>], [62, "excel", <><div>Excel</div><div>workbook</div></>], [76, "lake", <><div>OneLake</div><DD>catalog</DD></>],
    [42, "sql", <><div>SQL</div><div>Server</div></>], [58, "enter", <><div>Enter</div><div>data</div></>], [62, "dv", <div>Dataverse</div>], [76, "recent", <><div>Recent</div><DD>sources</DD></>]] },
  { w: 145, pl: 6, label: "Queries", items: [[80, "transform", <><div>Transform</div><DD>data</DD></>], [42, "refresh", <div>Refresh</div>]] },
  { w: 183, pl: 8, label: "Insert", items: [[54, "newviz", <><div>New</div><div>visual</div></>], [46, "textbox", <><div>Text</div><div>box</div></>], [66, "more", <><div>More</div><DD>visuals</DD></>]] },
  { w: 233, pl: 8, label: "Calculations", items: [[96, "vcalc", <><div>New visual</div><DD>calculation</DD></>, true], [58, "measure", <><div>New</div><div>measure</div></>], [62, "quick", <><div>Quick</div><div>measure</div></>]] },
  { w: 92, pl: 8, label: "Sensitivity", items: [[76, "sens", <><div>Sensitivity</div><MiniLine><Mini /></MiniLine></>, true]] },
  { w: 75, pl: 8, label: "Share", items: [[58, "publish", <div>Publish</div>]] },
  { w: 163, pl: 8, label: "Copilot", items: [[94, "prep", <><div>Prep data for</div><div>AI</div></>], [50, "copilot", <div>Copilot</div>]] },
];

const months = ["Janu...", "Febr...", "March", "April", "May", "June", "July", "Aug...", "Sept...", "Oct...", "Nov...", "Dec..."];
const lineX = [741, 765, 791, 815, 840, 864, 889, 914, 938, 963, 988, 1013];
const lineY = [605, 600, 596, 614, 612, 613, 612, 613, 612, 610, 608, 606];
const monthEnd = [737, 762, 787, 811, 834, 859, 884, 911, 935, 960, 985, 1011];

const arc = (cx: number, cy: number, r: number, R: number, a0: number, a1: number) => {
  const p = (rad: number, a: number) => `${cx + rad * Math.sin(a)} ${cy - rad * Math.cos(a)}`;
  const big = Math.abs(a1 - a0) > Math.PI ? 1 : 0;
  return `M${p(R, a0)}A${R} ${R} 0 ${big} 1 ${p(R, a1)}L${p(r, a1)}A${r} ${r} 0 ${big} 0 ${p(r, a0)}Z`;
};

export default function App() {
  return (
    <App0>
      <Global />
      <TitleBar>
        <QuickTools>
          <svg width="20" height="20" viewBox="0 0 20 20" fill="none"><path d="M1 1h15l3 3v15H1z" stroke="#fff" strokeWidth="1.3" /><path d="M5 1v7h9V1M4 19v-7h11v7" stroke="#fff" strokeWidth="1.2" /></svg>
          <svg width="22" height="20" viewBox="0 0 22 20" fill="none"><path d="M8 2L4 7h7c5 0 6 4 5 7l-3 4" stroke="#8A8886" strokeWidth="1.3" /><path d="M4 7v-5" stroke="#8A8886" strokeWidth="1.3" /></svg>
          <svg width="22" height="20" viewBox="0 0 22 20" fill="none"><path d="M14 2l4 5h-7c-5 0-6 4-5 7l3 4" stroke="#8A8886" strokeWidth="1.3" /><path d="M18 7V2" stroke="#8A8886" strokeWidth="1.3" /></svg>
          <DocName>Airbnb &nbsp;• Last saved: Today at 11:35 PM</DocName>
          <svg width="11" height="7" viewBox="0 0 11 7"><path d="M0 0h11L5.500 7z" fill="#fff" /></svg>
        </QuickTools>
        <SearchBar>
          <svg width="20" height="22" viewBox="0 0 20 22" fill="none"><circle cx="12" cy="8" r="6.5" stroke="#3B3A39" strokeWidth="1.3" /><path d="M7.500 13L1 20" stroke="#3B3A39" strokeWidth="1.5" /></svg>
          Search
        </SearchBar>
        <WinArea>
          <SignIn>Sign in</SignIn>
          <svg width="26" height="26" viewBox="0 0 26 26"><circle cx="13" cy="13" r="12.5" fill="#fff" /><circle cx="13" cy="8" r="3.8" fill="none" stroke="#252423" strokeWidth="1.5" /><path d="M6 14h14c0 5-3 8-7 8s-7-3-7-8z" fill="none" stroke="#252423" strokeWidth="1.5" /></svg>
          <WinGap />
          <WinBtn><svg width="14" height="2"><rect width="13" height="1.5" fill="#fff" /></svg></WinBtn>
          <WinBtn><svg width="13" height="13" viewBox="0 0 13 13" fill="none"><rect x="1.5" y="1" width="10" height="11" rx="1.5" stroke="#fff" strokeWidth="1.2" /></svg></WinBtn>
          <WinBtn><svg width="14" height="14" viewBox="0 0 14 14"><path d="M1.500 1l11 12M12.500 1l-11 12" stroke="#fff" strokeWidth="1.2" /></svg></WinBtn>
        </WinArea>
      </TitleBar>

      <TabBar>
        {([["File", 82], ["Home", 86, 1], ["Insert", 83], ["Modeling", 114], ["View", 76], ["Optimize", 109, 0, 1], ["Help", 76]] as [string, number, number?, number?][]).map(([t, w, on, hl]) => (
          <Tab key={t} $w={w} $on={!!on} $hl={!!hl}><span>{t}</span></Tab>
        ))}
        <ShareBtn>
          <svg width="20" height="20" viewBox="0 0 20 20" fill="none"><path d="M1.500 7v11h13" stroke="#fff" strokeWidth="1.2" /><path d="M11 3l7 5.500-7 5.500v-3.500c-3 0-5 1-6.500 3.500 0-5 2.500-7.500 6.500-7.500z" stroke="#fff" strokeWidth="1.2" /></svg>
          Share <Chev w={11} h={7} />
        </ShareBtn>
      </TabBar>

      <Ribbon>
        {ribbon.map(g => (
          <Group key={g.label} $w={g.w}>
            <GroupBody $pl={g.pl}>
              {g.items.map(([w, ic, label, off]) => (
                <Item key={ic} $w={w} $off={off}>
                  <ItemIcon>{RibbonIcons[ic]}</ItemIcon>
                  <ItemText>{label}</ItemText>
                </Item>
              ))}
              {g.clip && (
                <ClipCol>
                  <ClipRow><svg width="14" height="22" viewBox="0 0 14 22" fill="none"><path d="M3 1l8 14M11 1L3 15" stroke="#C2C0BE" /><circle cx="3" cy="18" r="2.5" stroke="#9CC3E6" /><circle cx="11" cy="18" r="2.5" stroke="#9CC3E6" /></svg>Cut</ClipRow>
                  <ClipRow><svg width="14" height="20" viewBox="0 0 14 20" fill="none"><path d="M1 1h8v4M1 1v15h3" stroke="#C2C0BE" /><path d="M4 5h6l3 3v11H4z" stroke="#C2C0BE" /></svg>Copy</ClipRow>
                  <ClipRow><svg width="16" height="20" viewBox="0 0 16 20" fill="none"><path d="M10 1l5 5-4 4-5-5z" fill="#E1DFDD" stroke="#C2C0BE" /><path d="M7 7L1 13l6 6 6-8" fill="#F9D9B5" stroke="#E8B98A" /></svg>Format painter</ClipRow>
                </ClipCol>
              )}
            </GroupBody>
            <GroupLabel>{g.label}</GroupLabel>
          </Group>
        ))}
        <Collapse><svg width="11" height="7" viewBox="0 0 11 7" fill="none"><path d="M1 6l4.500-4.500L10 6" stroke={K} strokeWidth="1.6" /></svg></Collapse>
      </Ribbon>

      <Body>
        <Rail>
          <RailItem $on><svg width="18" height="18" viewBox="0 0 18 18" fill="none"><path d="M1 1v16h16" stroke={K} strokeWidth="1.3" /><rect x="4" y="8" width="2.5" height="7" stroke={K} /><rect x="8" y="3" width="2.5" height="12" stroke={K} /><rect x="12.5" y="6" width="2.5" height="9" stroke={K} /></svg></RailItem>
          <RailItem><svg width="20" height="18" viewBox="0 0 20 18" fill="none"><rect x="1" y="1" width="18" height="16" stroke="#605E5C" /><path d="M1 5h18M1 9h18M1 13h18M7 1v16M13 1v16" stroke="#605E5C" /><rect x="1" y="1" width="18" height="4" fill="#8A8886" /></svg></RailItem>
          <RailItem><svg width="20" height="20" viewBox="0 0 20 20" fill="none"><rect x="1" y="1" width="8" height="8" stroke="#605E5C" /><path d="M1 4h8M1 13h6M1 16h6" stroke="#605E5C" /><rect x="1" y="11" width="7" height="8" stroke="#605E5C" /><rect x="12" y="5" width="7" height="11" stroke="#605E5C" /><path d="M12 8h7M12 12h7M9 5h3M8 14h4" stroke="#605E5C" /></svg></RailItem>
          <RailItem><svg width="22" height="22" viewBox="0 0 22 22" fill="none"><path d="M3 1h11l5 5v6H3zM3 17v4h16v-4" stroke="#605E5C" /><rect x="1" y="12" width="20" height="6" fill="#605E5C" /><text x="3" y="17" fontSize="5.5" fontFamily="Roboto" fontWeight="700" fill="#fff">DAX</text></svg></RailItem>
        </Rail>

        <Center>
          <Work>
            <Stage>
              <Canvas>
                <Row $h={101}>
                  <Slicer $w={119} $h={88}>
                    <SlicerTitle $pl={9} $pt={4}>Select City</SlicerTitle>
                    <Drop $w={90} $h={29} $ml={14} $mt={9}>All<Chev /></Drop>
                  </Slicer>
                  <Slicer $w={127} $h={88} $ml={10}>
                    <SlicerTitle $pl={9} $pt={4}>Select Year</SlicerTitle>
                    <Drop $w={97} $h={29} $ml={14} $mt={9}>All<Chev /></Drop>
                  </Slicer>
                  <TitleBlock>
                    <TitleText>Host<br />Analysis</TitleText>
                    <TitleThumb />
                  </TitleBlock>
                  <LogoCard>
                    <svg width="48" height="53" viewBox="0 0 46 52" fill="none">
                      <path d="M23 3c-4 0-6 2-8 6L3 36c-3 7 1 13 8 13 5 0 9-4 12-8 3 4 7 8 12 8 7 0 11-6 8-13L31 9c-2-4-4-6-8-6z" stroke="#FF5A5F" strokeWidth="3" />
                      <path d="M23 41c-5-6-9-12-9-16 0-5 4-8 9-8s9 3 9 8c0 4-4 10-9 16z" stroke="#FF5A5F" strokeWidth="3" />
                    </svg>
                    <LogoWord>airbnb</LogoWord>
                  </LogoCard>
                  <NavWrap>
                    <NavCard $w={125}><NavText>Overview<br />of Airbnb</NavText></NavCard>
                    <NavCard $w={123} $ml={14}><NavText>Property<br />Analysis</NavText></NavCard>
                    <NavCard $w={118} $ml={17}><NavText>Pricing<br />Analysis</NavText></NavCard>
                  </NavWrap>
                </Row>

                <Row $h={210}>
                  <Card $w={334} $h={218}>
                    <CardTitle $pt={4}>% of Total Listings by Host Type</CardTitle>
                    <Plot x={97} y={341} w={332} h={189}>
                      <path d={arc(262.5, 417, 34.5, 57.5, 0, Math.PI * 2 * 0.6779)} fill={YEL} />
                      <path d={arc(262.5, 417, 34.5, 57.5, Math.PI * 2 * 0.678, Math.PI * 2 - 0.0001)} fill={BLUE} />
                      <T x={130.5} y={362} w={84}>32.20% (32.2%)</T>
                      <T x={159} y={483} w={83}>67.80% (67.8%)</T>
                      <path d="M218 360h10l4 6M246 482h14v-6" stroke="#6E5BA8" strokeWidth="1" fill="none" />
                      <T x={112} y={508} w={56} b>host_type</T>
                      <Dot x={182} y={508} c={YEL} /><T x={190} y={508} w={97}>Multi-Listing Host</T>
                      <Dot x={298} y={508} c={BLUE} /><T x={305} y={508} w={104}>Single-Listing Host</T>
                    </Plot>
                  </Card>
                  <Card $w={730} $h={198} $ml={12}>
                    <CardTitle $pt={4}>Total Listings Count by host_type and room_type</CardTitle>
                    <Plot x={443} y={341} w={728} h={169}>
                      {[592, 733, 873.5, 1014, 1154.6].map(x => <GridV key={x} x={x} y1={353} y2={437} />)}
                      <rect x={592} y={372} width={444} height={18} fill={YEL} />
                      <rect x={1036} y={372} width={7} height={18} fill={BLUE} />
                      <rect x={1043} y={372} width={104} height={18} fill={NAVY} />
                      <rect x={1147} y={372} width={2} height={18} fill="#E66C37" />
                      <rect x={592} y={396} width={242} height={18} fill={YEL} />
                      <rect x={834} y={396} width={22} height={18} fill={NAVY} />
                      <T x={583} y={381} a="end" w={98}>Multi-Listing Host</T>
                      <T x={583} y={406} a="end" w={104}>Single-Listing Host</T>
                      <T x={458} y={394} a="middle" r={-90} b w={54}>host_type</T>
                      {[["0K", 592], ["2K", 733], ["4K", 873.5], ["6K", 1014], ["8K", 1154.6]].map(([t, x]) => <T key={t as string} x={x as number} y={448} a="middle">{t}</T>)}
                      <T x={873.5} y={465} a="middle" b fs={10.5} w={71}>Listings Count</T>
                      <T x={589} y={488} w={63} b>room_type</T>
                      <Dot x={665} y={488} c={YEL} /><T x={672} y={488} w={90}>Entire home/apt</T>
                      <Dot x={772} y={488} c={BLUE} /><T x={779} y={488} w={63}>Hotel room</T>
                      <Dot x={853.6} y={488} c={NAVY} /><T x={860} y={488} w={70}>Private room</T>
                      <Dot x={941} y={488} c="#E66C37" /><T x={948} y={488} w={71}>Shared room</T>
                    </Plot>
                  </Card>
                  <SlicerStack>
                    <Slicer $w={202} $h={59} $r={16}>
                      <SlicerTitle $pl={8} $pt={2} $fs={13.5} $ls={.1}>Host Type</SlicerTitle>
                      <Drop $w={172} $h={25} $ml={15} $mt={8} $fs={12}>All<Chev /></Drop>
                    </Slicer>
                    <Slicer $w={200} $h={63} $mt={1} $r={16}>
                      <SlicerTitle $pl={8} $pt={2} $fs={13.5} $ls={.1}>Reviewed Recently</SlicerTitle>
                      <Drop $w={169} $h={25} $ml={15} $mt={8} $fs={12}>All<Chev /></Drop>
                    </Slicer>
                    <Slicer $w={199} $h={108} $ml={3} $mt={1} $r={18}>
                      <BandHead>Dynamic Price Band<Chev c="#3C4CB4" w={10} h={6} /></BandHead>
                      <PriceInputs><PriceInput>10</PriceInput><PriceInput>129102</PriceInput></PriceInputs>
                      <BandSlider width="197" height="28" viewBox="0 0 197 28">
                        <rect x="34" y="12.5" width="137" height="3.5" fill="#fff" rx="1.5" />
                        <rect x="34" y="12.5" width="74" height="3.5" fill="#888" />
                        <circle cx="34" cy="14" r="12" fill="#fff" stroke="#666" strokeWidth="1.5" />
                        <circle cx="108" cy="14" r="12" fill="#fff" stroke="#666" strokeWidth="1.5" />
                      </BandSlider>
                    </Slicer>
                  </SlicerStack>
                </Row>

                <Row $h={156}>
                  <Card $w={550} $h={123} $mt={22}>
                    <CardTitle $pt={6} $pl={8}>Matrix: Host Type vs Room Type (listing count + % total</CardTitle>
                    <MatrixWrap $ml={9}>
                      <MatrixMain>
                        <MatrixGrid $w={521} $h={74} $cols="127px 154px 97px 143px" $rows="20px 31px 2px 21px">
                          <Cell>room_type</Cell><Cell $span={2}>Entire home/apt</Cell><Cell>Hotel room</Cell>
                          <Cell>host_type</Cell><Cell>%GT % of Total Listings</Cell><Cell>Listings Count</Cell><Cell>%GT % of Total Listings</Cell>
                          <HeadRule />
                          <Cell $bold $rule="#8CC3F5" $bb="none">Total</Cell><Cell $bold $right $bb="none">83.59%</Cell><Cell $bold $right $bb="none">9775</Cell><Cell $bold $right $bb="none">0.80%</Cell>
                        </MatrixGrid>
                        <VScroll $w={9}><VThumb $h={10} /></VScroll>
                      </MatrixMain>
                      <HScroll $w={521}><HThumb $w={161} /></HScroll>
                    </MatrixWrap>
                  </Card>
                  <Card $w={376} $h={145} $ml={10}>
                    <CardTitle $pt={5}>Avg review trends across time by host type</CardTitle>
                    <Plot x={657} y={552} w={374} h={115}>
                      <T x={666} y={568} w={57} b>host_type</T>
                      <Dot x={736} y={568} c="#fff" /><T x={744} y={568} w={98}>Multi-Listing Host</T>
                      <Dot x={853} y={568} c={BLUE} /><T x={860} y={568} w={103}>Single-Listing Host</T>
                      <T x={671} y={605} a="middle" r={-90} b fs={10.5}>Ave...</T>
                      <T x={717} y={602} a="middle">2</T><T x={717} y={617} a="middle">0</T>
                      <GridH x1={730} x2={1022} y={602} /><GridH x1={730} x2={1022} y={617} />
                      <polyline points={lineX.map((x, i) => `${x},${lineY[i] + 2}`).join(" ")} fill="none" stroke="#fff" strokeWidth="3" />
                      {lineX.map((x, i) => <circle key={x} cx={x} cy={lineY[i] + 2} r="4.5" fill="#fff" />)}
                      <polyline points={lineX.map((x, i) => `${x},${lineY[i]}`).join(" ")} fill="none" stroke={BLUE} strokeWidth="3" />
                      {lineX.map((x, i) => <circle key={x} cx={x} cy={lineY[i]} r="4.5" fill={BLUE} />)}
                      {months.map((m, i) => <T key={m} x={monthEnd[i]} y={628} a="end" r={-45} fs={11.5}>{m}</T>)}
                    </Plot>
                  </Card>
                  <Card $w={337} $h={133} $ml={14} $mt={22}>
                    <CardTitle $pt={6} $pl={9}>Matrix: Host Type vs Number of Reviews (LTM) and Price</CardTitle>
                    <MatrixWrap $ml={8}>
                      <MatrixMain>
                        <MatrixGrid $w={305} $h={64} $cols="127px 55px 61px 62px" $rows="32px 12px 20px">
                          <Cell $bb="2px solid #8CC3F5">host_type<SortMark>▼</SortMark></Cell><Cell $bb="2px solid #8CC3F5">0-50</Cell><Cell $bb="2px solid #8CC3F5" $right>101-150</Cell><Cell $bb="2px solid #8CC3F5" $right>151-200</Cell>
                          <Cell $top $bb="none" $rule="#8CC3F5">Single-Listing Host</Cell><Cell $top $right $bb="none">238.27</Cell><Cell $top $right $bb="none">148.67</Cell><Cell $top $right $bb="none">180.00</Cell>
                          <Cell $bold $bb="none" $rule="#8CC3F5">Total</Cell><Cell $bold $right $bb="none">257.24</Cell><Cell $bold $right $bb="none">330.00</Cell><Cell $bold $right $bb="none">213.23</Cell>
                        </MatrixGrid>
                        <VScroll $w={12}><VThumb $h={20} /></VScroll>
                      </MatrixMain>
                      <HScroll $w={318}><HThumb $w={120} /></HScroll>
                    </MatrixWrap>
                  </Card>
                </Row>

                <Row $h={266}>
                  <Card $w={333} $h={248}>
                    <CardTitle $pt={6}>Average of price by host_type</CardTitle>
                    <Plot x={97} y={709} w={331} h={217}>
                      <GridH x1={155} x2={415} y={765} /><GridH x1={155} x2={415} y={840} />
                      <rect x={221} y={741} width={56} height={99} fill="#A0D1FF" />
                      <rect x={295} y={752} width={55} height={88} fill={YEL} />
                      <T x={145} y={765} a="end">200</T><T x={145} y={840} a="end">0</T>
                      <T x={249} y={727} a="middle" w={36}>263.49</T><T x={322.5} y={738} a="middle" w={36}>234.39</T>
                      <T x={244} y={850} a="end" r={-45} fs={13.5}>Multi-Listi...</T><T x={318} y={850} a="end" r={-45} fs={13.5}>Single-Lis...</T>
                      <T x={287} y={911} a="middle" b w={48}>host_type</T>
                      <T x={111} y={779} a="middle" r={-90} b fs={10.5} fam="DejaVu Sans" w={80}>Average of price</T>
                    </Plot>
                  </Card>
                  <Card $w={329} $h={249} $ml={14} $square>
                    <CardTitle $pt={0} $pl={3}>Average of reviews_per_month by host_type</CardTitle>
                    <Plot x={445} y={724} w={325} h={202}>
                      <GridH x1={483} x2={765} y={747} /><GridH x1={483} x2={765} y={806} /><GridH x1={483} x2={765} y={865} />
                      <rect x={554} y={756} width={60} height={109} fill={YEL} />
                      <rect x={632} y={758} width={60} height={107} fill="#EE8DC8" />
                      <T x={474} y={747} a="end">2</T><T x={474} y={806} a="end">1</T><T x={474} y={865} a="end">0</T>
                      <T x={584} y={743} a="middle" w={22}>1.83</T><T x={662} y={743} a="middle" w={22}>1.81</T>
                      <T x={585} y={885} a="middle" w={69}>Single-Listi...</T><T x={585} y={902} a="middle">Host</T>
                      <T x={664} y={885} a="middle" w={68}>Multi-Listing</T><T x={664} y={902} a="middle">Host</T>
                      <T x={625} y={917} a="middle" b w={48}>host_type</T>
                      <T x={454} y={799} a="middle" r={-90} b fs={10.5} fam="DejaVu Sans" w={128}>Average of reviews_per_...</T>
                    </Plot>
                  </Card>
                  <Card $w={334} $h={250} $ml={12}>
                    <CardTitle $pt={6} $pl={9}>Avg Availability by Host Type</CardTitle>
                    <Plot x={785} y={709} w={332} h={219}>
                      <GridH x1={842} x2={1108} y={752} /><GridH x1={842} x2={1108} y={797} /><GridH x1={842} x2={1108} y={842} />
                      <rect x={909} y={745} width={56} height={97} fill="#3EA0FF" />
                      <rect x={983} y={763} width={56} height={79} fill={YEL} />
                      <T x={832} y={752} a="end">200</T><T x={832} y={797} a="end">100</T><T x={832} y={842} a="end">0</T>
                      <T x={937} y={732} a="middle" w={36}>214.64</T><T x={1011} y={749} a="middle" w={36}>174.97</T>
                      <T x={933} y={855} a="end" r={-45} fs={13.5}>Multi-Listi...</T><T x={1008} y={855} a="end" r={-45} fs={13.5}>Single-Lis...</T>
                      <T x={975} y={914} a="middle" b w={48}>host_type</T>
                      <T x={799.5} y={780} a="middle" r={-90} b fs={10.5} fam="DejaVu Sans" w={120}>Average of availability_...</T>
                    </Plot>
                  </Card>
                  <Card $w={257} $h={240} $ml={14} $mt={10}>
                    <CardTitle $pt={7} $lh={18} $pl={9}>Host Type &gt; Price Category &gt; City (avg price drilldown)</CardTitle>
                    <Plot x={1133} y={736} w={255} h={192}>
                      <defs><clipPath id="sank"><rect x={1141} y={736} width={238} height={192} /></clipPath></defs>
                      <g clipPath="url(#sank)">
                        <rect x={1141} y={739} width={238} height={58} fill="#F0B2B7" stroke="#B697C8" />
                        <T x={1353} y={761} fam={UI} fs={14} c="#252423">pric</T>
                        <rect x={1353} y={769} width={26} height={2} fill={BLUE} />
                        <T x={1353} y={783} fam={UI} fs={13} c="#7B7B7B">High</T>
                        <path d="M1302 909C1330 909 1328 849 1353 849" fill="none" stroke={BLUE} strokeWidth="1.5" />
                        <path d="M1302 911H1353" stroke="#E8E6F5" strokeWidth="1.5" />
                        <path d="M1302 912q8 1 12 7" stroke="#E8E6F5" strokeWidth="1" fill="none" />
                        <rect x={1167} y={906} width={135} height={10} fill={BLUE} stroke="#7DA4E8" />
                        <rect x={1353} y={844} width={30} height={10} fill={BLUE} stroke="#7DA4E8" />
                        <rect x={1353} y={906} width={30} height={10} fill={BLUE} stroke="#7DA4E8" />
                        <T x={1359} y={865} b fs={13}>High</T>
                        <T x={1359} y={879} fs={13}>447</T>
                      </g>
                    </Plot>
                  </Card>
                </Row>
              </Canvas>
            </Stage>
            <FilterPane>
              <Dbl dir="l" />
              <FilterGlyph width="16" height="14" viewBox="0 0 16 14" fill="none"><path d="M14.500 1v12L6 8H1.500v-2H6z" stroke={K} strokeWidth="1.2" /></FilterGlyph>
              <FilterWord>Filters</FilterWord>
            </FilterPane>
          </Work>
          <PageBar>
            <DeviceBar>
              <DeviceBtn $w={52} $on>
                <svg width="24" height="26" viewBox="0 0 24 26" fill="none"><rect x="1" y="2" width="22" height="17" stroke={K} strokeWidth="1.3" /><path d="M12 19v4M8 24h8" stroke={K} strokeWidth="1.3" /></svg>
              </DeviceBtn>
              <DeviceBtn $w={62}>
                <svg width="16" height="28" viewBox="0 0 16 28" fill="none"><rect x="1" y="1" width="14" height="25" rx="1.5" stroke={K} strokeWidth="1.3" /><circle cx="8" cy="22" r="1" fill={K} /></svg>
              </DeviceBtn>
              <DeviceBtn $w={45}>
                <svg width="36" height="28" viewBox="0 0 36 28"><path d="M5 9L1 14l4 5zM31 9l4 5-4 5z" fill="#C8C6C4" /></svg>
              </DeviceBtn>
            </DeviceBar>
            <PageTab $w={230}>Page 1: Overview of Airbnb</PageTab>
            <PageTab $w={217}>Page 2: Property Analysis</PageTab>
            <PageTab $w={205}>Page 3: Pricing Analysis</PageTab>
            <PageTab $w={196} $on>Page 4: Host Analysis<TabClose>x</TabClose></PageTab>
            <AddPage><svg width="14" height="14" viewBox="0 0 14 14"><path d="M5.500 0h3v5.500H14v3H8.500V14h-3V8.500H0v-3h5.500z" fill="#fff" /></svg></AddPage>
          </PageBar>
        </Center>

        <VizPane>
          <PaneHead $pl={9} $pr={10}>Visualizations<Dbl dir="r" /></PaneHead>
          <BuildLabel>Build visual</BuildLabel>
          <VizTabs>
            <VizTabOn>
              <svg width="30" height="30" viewBox="0 0 30 30" fill="none"><path d="M2 1h24" stroke={K} /><rect x="1.5" y="6" width="27" height="10" fill={GREEN} stroke={K} strokeDasharray="2 1.5" /><rect x="1.5" y="18.5" width="27" height="10" fill={GREEN} stroke={K} strokeDasharray="2 1.5" /></svg>
            </VizTabOn>
            <svg width="32" height="32" viewBox="0 0 32 32" fill="none"><path d="M11 30H2V1h13l7 8v7" stroke={K} strokeWidth="1.2" /><path d="M15 1v8h7" stroke={K} strokeWidth="1.2" /><path d="M12 30c5 1 8-1 9-5l9-10-2-2-10 9c-4 1-6 3-6 8z" fill="#fff" stroke={K} strokeWidth="1.2" /></svg>
          </VizTabs>
          <Notch width="225" height="9" viewBox="0 0 225 9" fill="none"><path d="M0 8.500H20L29.500 1 39 8.500H225" stroke="#A19F9D" /></Notch>
          <Gallery>
            {vizIcons.map((ic, i) => <svg key={i} width="24" height="24" viewBox="0 0 24 24">{ic}</svg>)}
            <Dots>...</Dots>
          </Gallery>
          <GalleryEnd />
          <Rule />
          <SectionName $mt={14}>Values</SectionName>
          <DropBox $h={35} $mt={6} $pl={12}>Add data fields here</DropBox>
          <SectionName $mt={14}>Drill through</SectionName>
          <ToggleRow $mt={11}>Cross-report<Toggle><Knob />Off</Toggle></ToggleRow>
          <ToggleRow $mt={14}>Keep all filters<Toggle $on><Knob $on />On</Toggle></ToggleRow>
          <DropBox $h={31} $mt={14} $pl={10}>Add drill-through fields here</DropBox>
        </VizPane>

        <DataPane>
          <PaneHead $pl={10} $pr={10}>Data<Dbl dir="r" /></PaneHead>
          <DataSearch>
            <svg width="18" height="18" viewBox="0 0 18 18" fill="none"><circle cx="7" cy="7" r="5.5" stroke="#605E5C" strokeWidth="1.2" /><path d="M11 11l6 6" stroke="#605E5C" strokeWidth="1.2" /></svg>
            Search
          </DataSearch>
          <ListArea>
            <FieldList>
              <FieldRow $root>
                <Caret><Chev c="#605E5C" w={13} h={7} /></Caret>
                <FieldIcon><svg width="16" height="16" viewBox="0 0 16 16" fill="none"><rect x="1" y="1" width="14" height="14" rx="2.5" stroke={K} strokeWidth="1.2" /><path d="M1 5.500h14M1 10.500h14M5.500 1v14M10.500 1v14" stroke={K} /></svg></FieldIcon>
                cleaned_airbnb_com...
              </FieldRow>
              {fields.map(([name, kind, expand], i) => (
                <FieldRow key={i}>
                  {expand && <ExpandMark width="9" height="14" viewBox="0 0 9 14" fill="none"><path d="M1 1l6 6-6 6" stroke="#605E5C" strokeWidth="1.1" /></ExpandMark>}
                  <Box />
                  <FieldIcon>{fieldIcon(kind)}</FieldIcon>
                  {name}
                </FieldRow>
              ))}
            </FieldList>
            <DataThumb />
          </ListArea>
        </DataPane>
      </Body>

      <Status>
        Page 4 of 4
        <StatusRight>
          <svg width="155" height="16" viewBox="0 0 155 16" fill="none"><path d="M0 8h7M14 8h125" stroke="#605E5C" /><rect x="60" y="2" width="5" height="12" fill="#605E5C" /><path d="M83 5v6" stroke="#605E5C" /><path d="M143 8h9M147.500 3.500v9" stroke="#605E5C" strokeWidth="1.5" /></svg>
          <ZoomPct>83%</ZoomPct>
          <FitIcon width="20" height="16" viewBox="0 0 20 16" fill="none"><rect x=".5" y=".5" width="19" height="15" stroke="#605E5C" /><path d="M4 6V3.500h3M16 6V3.500h-3M4 10v2.500h3M16 10v2.500h-3" stroke="#605E5C" /></FitIcon>
          <UpdateNote>Update available (click to download)</UpdateNote>
        </StatusRight>
      </Status>
    </App0>
  );
}
